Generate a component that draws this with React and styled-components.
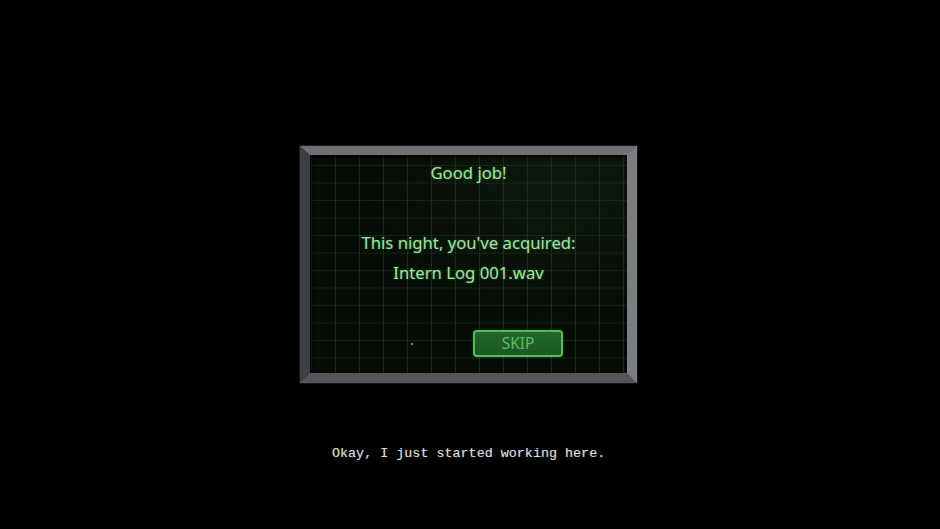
import React from "react";
import styled, { createGlobalStyle } from "styled-components";

const Global = createGlobalStyle`
  html, body { margin: 0; padding: 0; background: #000; }
  body { width: 940px; height: 529px; overflow: hidden; }
`;

const Stage = styled.main`
  width: 940px;
  height: 529px;
  background: #000;
  display: flex;
  flex-direction: column;
  padding-top: 146px;
  box-sizing: border-box;
`;

const Bezel = styled.section`
  margin-left: 300px;
  width: 337px;
  height: 237px;
  box-sizing: border-box;
  border-style: solid;
  border-width: 9px 10px 10px 10px;
  border-top-color: #6f7076;
  border-left-color: #3e3f45;
  border-right-color: #7c7d82;
  border-bottom-color: #55565c;
  background: #555;
  box-shadow:
    inset 1px 1px 0 #2a2b2f,
    0 0 0 1px #18181c;
`;

const Screen = styled.div`
  width: 100%;
  height: 100%;
  box-sizing: border-box;
  display: flex;
  flex-direction: column;
  align-items: center;
  background-color: #050c05;
  background-image:
    radial-gradient(ellipse at 78% 12%, rgba(60, 80, 60, 0.18), rgba(0, 0, 0, 0) 55%),
    linear-gradient(to right, rgba(40, 90, 40, 0.4) 1px, transparent 1px),
    linear-gradient(to bottom, rgba(40, 90, 40, 0.32) 1px, transparent 1px);
  background-size: 100% 100%, 24px 17.5px, 24px 17.5px;
  background-position: 0 0, 1px 10px, 1px 10px;
  box-shadow: inset 2px 2px 4px rgba(0, 0, 0, 0.8);
  font-family: "Noto Sans", "Open Sans", sans-serif;
  color: #9ce79c;
`;

const Line = styled.p`
  margin: ${(p) => p.$gap}px 0 0;
  font-size: 16.7px;
  line-height: 20px;
  text-shadow: 0 0 3px rgba(120, 230, 120, 0.35);
`;

const ActionRow = styled.div`
  align-self: stretch;
  margin-top: 47px;
  display: flex;
  align-items: center;
  padding-left: 101px;
  gap: 60px;
`;

const Dot = styled.span`
  width: 2px;
  height: 2px;
  background: #9aa09a;
  border-radius: 1px;
`;

const SkipButton = styled.button`
  width: 90px;
  height: 27px;
  box-sizing: border-box;
  border: 2px solid #55bb58;
  border-radius: 4px;
  background: linear-gradient(#22672a, #1b5822);
  color: #5dbd62;
  font-family: "Noto Sans", "Open Sans", sans-serif;
  font-size: 15.5px;
  line-height: 1;
  padding: 0;
  box-shadow: 0 0 3px rgba(90, 200, 90, 0.3);
`;

const Subtitle = styled.p`
  margin: 63px 0 0;
  padding-left: 332px;
  font-family: "Liberation Mono", "DejaVu Sans Mono", monospace;
  font-size: 13.4px;
  line-height: 16px;
  color: #dcdcdc;
  white-space: pre;
  text-shadow: 0 0 1px rgba(255, 255, 255, 0.4);
`;

export default function App() {
  return (
    <>
      <Global />
      <Stage>
        <Bezel>
          <Screen>
            <Line $gap={8}>Good job!</Line>
            <Line $gap={50}>This night, you've acquired:</Line>
            <Line $gap={10}>Intern Log 001.wav</Line>
            <ActionRow>
              <Dot />
              <SkipButton>SKIP</SkipButton>
            </ActionRow>
          </Screen>
        </Bezel>
        <Subtitle>Okay, I just started working here.</Subtitle>
      </Stage>
    </>
  );
}
